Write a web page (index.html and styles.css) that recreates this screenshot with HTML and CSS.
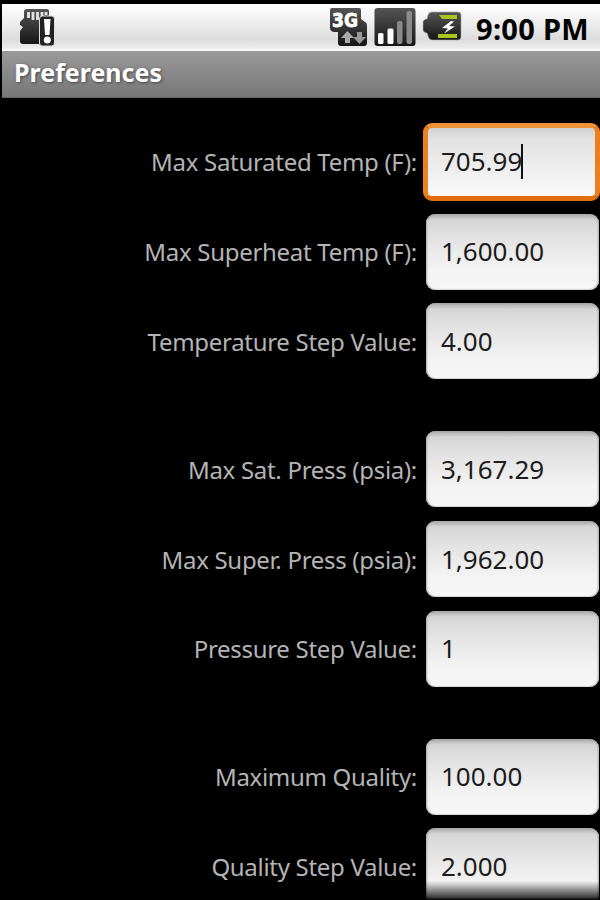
FILE: index.html
```html
<!DOCTYPE html>
<html lang="en">
<head>
    <meta charset="UTF-8">
    <meta name="viewport" content="width=device-width, initial-scale=1.0">
    <title>Preferences</title>
    <link rel="stylesheet" href="styles.css">
</head>
<body>
<div class="screen">
    <div class="status-bar">
        <svg class="icon-sd" width="38" height="40" viewBox="0 0 38 40">
            <defs>
                <linearGradient id="dark" x1="0" y1="0" x2="0" y2="1">
                    <stop offset="0" stop-color="#555"/>
                    <stop offset="1" stop-color="#161616"/>
                </linearGradient>
            </defs>
            <path d="M8 1h20q2 0 2 2v33H4q-3 0-3-3V23l3-4-3-2v-3l4-4V4q0-3 3-3z" fill="url(#dark)"/>
            <path d="M9.500 4v6M14 4v8M18.500 4v8M23 4v5M27 4v3" stroke="#e4e4e4" stroke-width="2.800"/>
            <rect x="20.500" y="8" width="15" height="30" rx="3" fill="#222" stroke="#ddd" stroke-width="1"/>
            <path d="M25 11h6.500l-1 16h-4.500z" fill="#fff"/>
            <circle cx="28.300" cy="32" r="3.500" fill="#fff"/>
        </svg>
        <div class="status-icons">
            <svg width="40" height="40" viewBox="0 0 40 40">
                <path d="M3 0h27q2 0 2 2v9l4 3q2 1 2 3v18q0 3-3 3H12q-3 0-3-3V24H5q-4-1-4-4V2q0-2 2-2z" fill="url(#dark)"/>
                <text class="net-label" x="3" y="18.500" textLength="26" lengthAdjust="spacingAndGlyphs">3G</text>
                <path d="M18.500 23l6.500 7h-4v5h-5v-5h-4z" fill="#aaa"/>
                <path d="M30.500 36l6.500-7h-4v-5h-5v5h-4z" fill="#999"/>
            </svg>
            <svg width="42" height="40" viewBox="0 0 42 40">
                <rect x=".5" y="0" width="41" height="38" rx="3" fill="url(#dark)"/>
                <rect x="4" y="25" width="5.500" height="11" rx="1.500" fill="#fff"/>
                <rect x="13.500" y="20.500" width="6" height="15.500" rx="1.500" fill="#fff"/>
                <rect x="23" y="13" width="5.500" height="23" rx="2" fill="#8a8a8a"/>
                <rect x="32.500" y="3" width="5.500" height="33" rx="2" fill="#8a8a8a"/>
            </svg>
            <svg class="icon-battery" width="40" height="40" viewBox="0 0 40 40">
                <path d="M10 4h26q3 0 3 3v22q0 3-3 3H10q-3 0-4-4l-1-3H4q-3-1-3-3v-8q0-2 3-3h1l1-4q1-3 4-3z" fill="url(#dark)" stroke="#aaa" stroke-width=".6"/>
                <path d="M17 7h18v4H20zM16 26h19v4H16z" fill="#a9c51f"/>
                <path d="M29 13l-9 7 6 .5-4 5 11-7-6-.5 5-4.500z" fill="#fff"/>
            </svg>
        </div>
        <span class="clock">9:00 PM</span>
    </div>
    <div class="title-bar">Preferences</div>
    <div class="form">
        <div class="group">
            <div class="row">
                <span class="label">Max Saturated Temp (F):</span>
                <div class="field focused">705.99<span class="caret"></span></div>
            </div>
            <div class="row">
                <span class="label">Max Superheat Temp (F):</span>
                <div class="field">1,600.00</div>
            </div>
            <div class="row">
                <span class="label">Temperature Step Value:</span>
                <div class="field">4.00</div>
            </div>
        </div>
        <div class="group">
            <div class="row">
                <span class="label">Max Sat. Press (psia):</span>
                <div class="field">3,167.29</div>
            </div>
            <div class="row">
                <span class="label">Max Super. Press (psia):</span>
                <div class="field">1,962.00</div>
            </div>
            <div class="row">
                <span class="label">Pressure Step Value:</span>
                <div class="field">1</div>
            </div>
        </div>
        <div class="group">
            <div class="row">
                <span class="label">Maximum Quality:</span>
                <div class="field">100.00</div>
            </div>
            <div class="row">
                <span class="label">Quality Step Value:</span>
                <div class="field">2.000</div>
            </div>
        </div>
    </div>
    <div class="fade"></div>
</div>
</body>
</html>
```

FILE: styles.css
```css
* { box-sizing: border-box; }
body { margin: 0; background: #000; font-family: "Noto Sans", "Open Sans", sans-serif; }
.screen {
    position: relative;
    width: 600px;
    height: 900px;
    padding: 4px 0 0 2px;
    overflow: hidden;
    background: #000;
}

.status-bar {
    display: flex;
    height: 47px;
    padding: 4px 10px 0 17px;
    background: linear-gradient(#fff, #f0f0f0 35%, #dcdcdc 75%, #ececec 94%, #fff);
}
.status-icons { display: flex; gap: 5px; margin-left: auto; }
.icon-battery { margin-left: 1px; }
.net-label { font: bold 20px "DejaVu Sans", sans-serif; fill: #fff; stroke: #fff; stroke-width: .8px; }
.clock {
    width: 114px;
    margin-left: 14px;
    font-size: 29px;
    font-weight: bold;
    letter-spacing: .3px;
    line-height: 41px;
    white-space: nowrap;
    color: #000;
}

.title-bar {
    height: 47px;
    padding-left: 12px;
    background: linear-gradient(#999, #777);
    border-bottom: 1px solid #666;
    font-size: 25px;
    font-weight: bold;
    line-height: 43px;
    color: #fff;
    text-shadow: 1px 1px 3px #444;
}

.form { padding: 19px 1px 0 0; }
.group { margin-bottom: 38px; }
.row { display: flex; align-items: center; justify-content: flex-end; height: 89.8px; }
.label { margin-right: 9px; font-size: 24px; letter-spacing: -.3px; color: #b4b4b4; }
.field {
    display: flex;
    align-items: center;
    width: 173px;
    height: 76px;
    padding: 0 0 1px 15px;
    border-radius: 9px;
    background: linear-gradient(#a8a8a8, #d6d6d6 8%, #e4e4e4 35%, #f4f4f4 75%, #f6f6f6 96%, #fff);
    box-shadow: inset 1px 0 2px #aaa, inset -1px 0 2px #aaa;
    font-size: 26px;
    color: #1c1c1c;
}
.field.focused {
    width: 177px;
    height: 78px;
    margin: 0 -1px 0 -3px;
    padding-left: 13px;
    border: 5px solid;
    border-color: #f09234 #ed7f1e #e2700f;
    background: linear-gradient(#d0d0d0, #e2e2e2 15%, #eee 60%, #fafafa);
    box-shadow: none;
}
.caret { width: 2px; height: 35px; margin-left: -1px; background: #111; }

/* scroll edge at the bottom of the list */
.fade {
    position: absolute;
    left: 0;
    right: 0;
    bottom: 0;
    height: 19px;
    background: linear-gradient(rgba(0, 0, 0, 0), rgba(0, 0, 0, .75) 85%, #000);
}
```
